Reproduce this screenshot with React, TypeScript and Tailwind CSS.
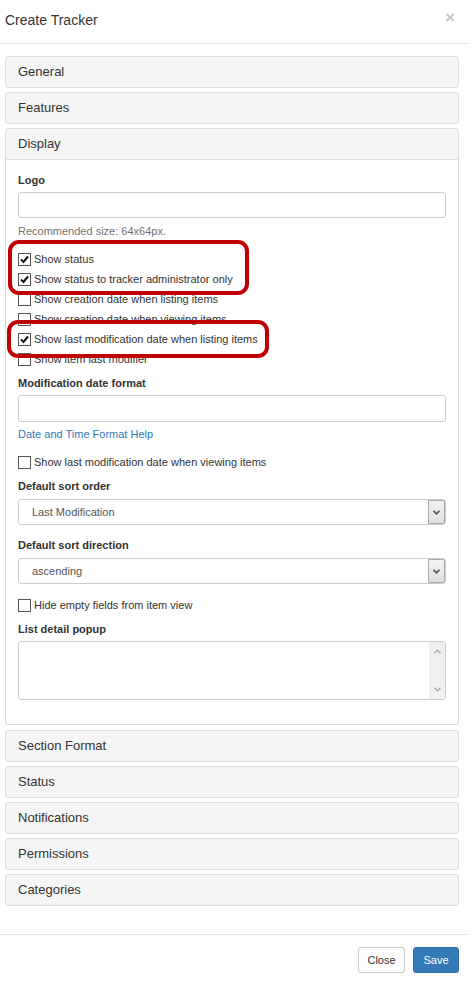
import React from 'react';

const font = "font-['Liberation_Sans',Arial,sans-serif]";

function Check({ checked }: { checked?: boolean }) {
  return (
    <span className="w-[13px] h-[13px] border border-[#555] bg-white flex items-center justify-center shrink-0">
      {checked && (
        <svg width="9" height="9" viewBox="0 0 9 9">
          <path d="M1 4.5 L3.5 7 L8 1.5" fill="none" stroke="#111" strokeWidth="2" />
        </svg>
      )}
    </span>
  );
}

function CheckRow({ label, checked }: { label: string; checked?: boolean }) {
  return (
    <div className="h-[20px] flex items-center gap-[3px] text-[11px] text-[#333]">
      <Check checked={checked} />
      <span>{label}</span>
    </div>
  );
}

function Label({ children, className = '' }: { children: React.ReactNode; className?: string }) {
  return <div className={`h-[14px] leading-[14px] text-[11px] font-bold text-[#333] ${className}`}>{children}</div>;
}

function Select({ value, className = '' }: { value: string; className?: string }) {
  return (
    <div className={`h-[26px] border border-[#ccc] rounded-[3px] flex items-center justify-between bg-white ${className}`}>
      <span className="pl-[13px] text-[11px] text-[#555]">{value}</span>
      <span className="w-[17px] h-full border border-[#aaa] rounded-r-[2px] bg-gradient-to-b from-[#f2f2f2] to-[#e0e0e0] flex items-center justify-center">
        <svg width="7" height="5" viewBox="0 0 7 5">
          <path d="M0.5 0.8 L3.5 3.8 L6.5 0.8" fill="none" stroke="#555" strokeWidth="1.6" />
        </svg>
      </span>
    </div>
  );
}

function Panel({ title, className = '' }: { title: string; className?: string }) {
  return (
    <div className={`h-[32px] border border-[#ddd] rounded-[3px] bg-[#f5f5f5] flex items-center pl-[12px] text-[13px] text-[#333] ${className}`}>
      {title}
    </div>
  );
}

export default function App() {
  return (
    <div className={`w-[476px] h-[985px] bg-white ${font}`}>
      <div className="w-[468px]">
        <div className="h-[44px] border-b border-[#e5e5e5] flex items-start justify-between px-[5px]">
          <h4 className="mt-[11px] text-[14px] leading-[18px] text-[#333]">Create Tracker</h4>
          <span className="mt-[5px] mr-[8px] text-[17px] font-bold text-[#c4c4c4]">×</span>
        </div>

        <div className="ml-[5px] w-[454px] pt-[12px]">
          <Panel title="General" />
          <Panel title="Features" className="mt-[4px]" />

          <div className="mt-[4px] border border-[#ddd] rounded-[3px]">
            <div className="h-[31px] bg-[#f5f5f5] border-b border-[#ddd] flex items-center pl-[12px] text-[13px] text-[#333]">
              Display
            </div>
            <div className="relative px-[12px] pt-[13px] pb-[24px]">
              <Label>Logo</Label>
              <div className="mt-[5px] h-[26px] border border-[#ccc] rounded-[3px]" />
              <div className="mt-[6px] h-[14px] leading-[14px] text-[11px] text-[#737373]">Recommended size: 64x64px.</div>
              <div className="mt-[11px]">
                <CheckRow label="Show status" checked />
                <CheckRow label="Show status to tracker administrator only" checked />
                <CheckRow label="Show creation date when listing items" />
                <CheckRow label="Show creation date when viewing items" />
                <CheckRow label="Show last modification date when listing items" checked />
                <CheckRow label="Show item last modifier" />
              </div>
              <Label className="mt-[7px]">Modification date format</Label>
              <div className="mt-[5px] h-[27px] border border-[#ccc] rounded-[3px]" />
              <div className="mt-[5px] h-[14px] leading-[14px] text-[11px] text-[#337ab7]">Date and Time Format Help</div>
              <div className="mt-[11px]">
                <CheckRow label="Show last modification date when viewing items" />
              </div>
              <Label className="mt-[7px]">Default sort order</Label>
              <Select value="Last Modification" className="mt-[6px]" />
              <Label className="mt-[13px]">Default sort direction</Label>
              <Select value="ascending" className="mt-[6px]" />
              <div className="mt-[11px]">
                <CheckRow label="Hide empty fields from item view" />
              </div>
              <Label className="mt-[7px]">List detail popup</Label>
              <div className="mt-[5px] h-[59px] border border-[#ccc] rounded-[3px] flex justify-end">
                <div className="w-[16px] h-full bg-[#f0f0f0] flex flex-col items-center justify-between py-[7px]">
                  <svg width="7" height="5" viewBox="0 0 7 5">
                    <path d="M0.5 4.2 L3.5 1.2 L6.5 4.2" fill="none" stroke="#aaa" strokeWidth="1.4" />
                  </svg>
                  <svg width="7" height="5" viewBox="0 0 7 5">
                    <path d="M0.5 0.8 L3.5 3.8 L6.5 0.8" fill="none" stroke="#aaa" strokeWidth="1.4" />
                  </svg>
                </div>
              </div>

              <div className="absolute left-[2px] top-[80px] w-[241px] h-[55px] border-[4px] border-[#c00000] rounded-[11px]" />
              <div className="absolute left-[1px] top-[160px] w-[262px] h-[38px] border-[4px] border-[#c00000] rounded-[11px]" />
            </div>
          </div>

          <Panel title="Section Format" className="mt-[5px]" />
          <Panel title="Status" className="mt-[4px]" />
          <Panel title="Notifications" className="mt-[4px]" />
          <Panel title="Permissions" className="mt-[4px]" />
          <Panel title="Categories" className="mt-[4px]" />
        </div>

        <div className="mt-[28px] border-t border-[#e5e5e5] pt-[12px] pr-[9px] flex justify-end gap-[8px]">
          <button className="w-[47px] h-[26px] border border-[#ccc] rounded-[3px] bg-white text-[11px] text-[#333]">Close</button>
          <button className="w-[46px] h-[26px] border border-[#2e6da4] rounded-[3px] bg-[#337ab7] text-[11px] text-white">Save</button>
        </div>
      </div>
    </div>
  );
}
